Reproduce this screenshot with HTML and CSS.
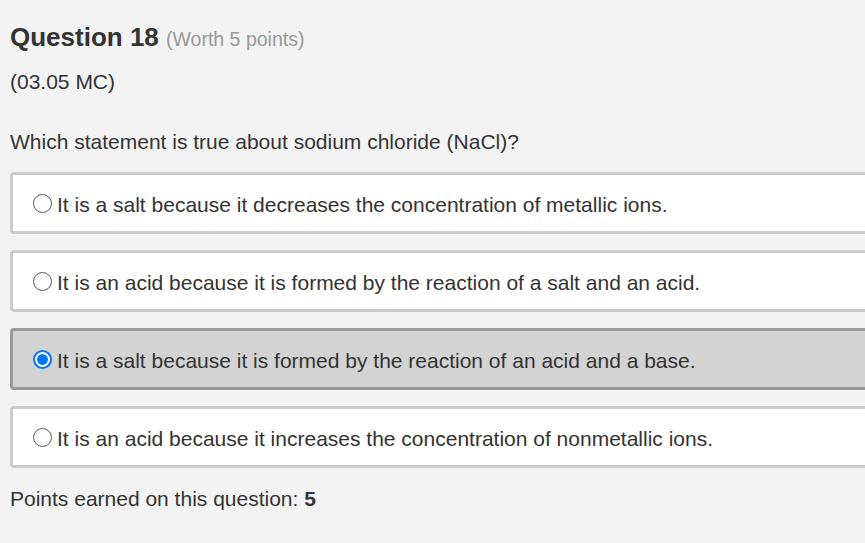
FILE: index.html
```html
<!DOCTYPE html>
<html>
<head>
<meta charset="utf-8">
<link rel="stylesheet" href="styles.css">
</head>
<body>
<div class="page">
  <h2 class="title">Question 18 <span class="worth">(Worth 5 points)</span></h2>
  <p class="code">(03.05 MC)</p>
  <p class="prompt">Which statement is true about sodium chloride (NaCl)?</p>
  <div class="options">
    <label class="option"><span class="radio"></span><span class="text">It is a salt because it decreases the concentration of metallic ions.</span></label>
    <label class="option"><span class="radio"></span><span class="text">It is an acid because it is formed by the reaction of a salt and an acid.</span></label>
    <label class="option selected"><span class="radio checked"></span><span class="text">It is a salt because it is formed by the reaction of an acid and a base.</span></label>
    <label class="option"><span class="radio"></span><span class="text">It is an acid because it increases the concentration of nonmetallic ions.</span></label>
  </div>
  <p class="earned">Points earned on this question: <b>5</b></p>
</div>
</body>
</html>
```
FILE: styles.css
```css
html, body {
  margin: 0;
  padding: 0;
  background: #f3f3f3;
  overflow: hidden;
}
body {
  font-family: "Liberation Sans", Arial, sans-serif;
  color: #333;
}
.page {
  padding: 20px 0 0 10px;
}
.title {
  margin: 0;
  font-size: 26px;
  font-weight: bold;
  line-height: 34px;
  color: #333;
}
.worth {
  font-size: 19.5px;
  font-weight: normal;
  color: #999;
}
.code {
  margin: 14px 0 0;
  font-size: 21px;
  line-height: 24px;
}
.prompt {
  margin: 36px 0 0;
  font-size: 21px;
  line-height: 24px;
}
.options {
  margin-top: 18px;
  width: 880px;
  display: flex;
  flex-direction: column;
  gap: 16px;
}
.option {
  display: flex;
  align-items: center;
  gap: 5px;
  height: 53px;
  box-sizing: content-box;
  padding: 3px 0 0 20px;
  background: #fff;
  border: 3px solid #cbcbcb;
  border-radius: 4px;
  font-size: 21px;
}
.option.selected {
  background: #d3d3d3;
  border-color: #999;
}
.radio {
  width: 19px;
  height: 19px;
  box-sizing: border-box;
  border-radius: 50%;
  border: 1px solid #595959;
  background: #fff;
  flex: none;
  margin-top: -2px;
}
.radio.checked {
  border: 2px solid #0075ff;
  background: radial-gradient(circle, #0075ff 0 5px, #fff 5.6px);
}
.earned {
  margin: 19px 0 0;
  font-size: 21px;
  line-height: 24px;
}
.earned b {
  color: #333;
}
```
